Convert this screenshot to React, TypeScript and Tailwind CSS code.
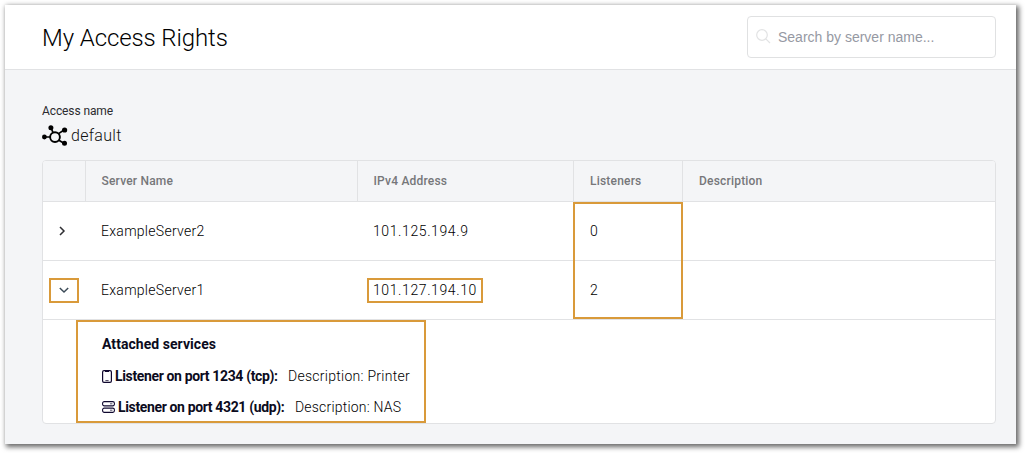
import React from "react";

const HubIcon = () => (
  <svg width="27" height="22" viewBox="0 0 27 22" fill="none" stroke="#000" className="block shrink-0">
    <circle cx="13" cy="12.1" r="4.9" strokeWidth="1.9" />
    <path d="M2 12h6M9 3l2 4.4M16.6 8.6 22 5M16.8 15.2l5.2 3.1" strokeWidth="1.7" />
    <g fill="#000" stroke="none">
      <circle cx="2.4" cy="12" r="2.4" />
      <circle cx="8.9" cy="2.8" r="2.5" />
      <circle cx="22.6" cy="5" r="2.6" />
      <circle cx="22.5" cy="18.2" r="2.5" />
    </g>
  </svg>
);

const SearchIcon = () => (
  <svg width="15" height="15" viewBox="0 0 15 15" fill="none" stroke="#e2e3e4" strokeWidth="1.2" className="block shrink-0">
    <circle cx="6" cy="6" r="5.3" />
    <path d="m9.8 9.8 4.2 4.2" />
  </svg>
);

const Chevron = ({ open }: { open?: boolean }) => (
  <svg width="10" height="10" viewBox="0 0 10 10" fill="none" stroke={open ? "#3b4a57" : "#2f2f33"} strokeWidth="1.5" className="block">
    {open ? <path d="m0.8 3 4.2 4 4.2-4" /> : <path d="m3 0.9 4 4.1-4 4.1" />}
  </svg>
);

const DeviceIcon = () => (
  <svg width="10" height="13" viewBox="0 0 10 13" fill="none" stroke="#10082f" className="block shrink-0">
    <rect x="0.6" y="0.6" width="8.8" height="11.8" rx="1.4" strokeWidth="1.2" />
    <path d="M3 1.2h4" strokeWidth="1.4" />
    <path d="M3.4 10.6h3.2" strokeWidth="0.8" />
  </svg>
);

const ServerIcon = () => (
  <svg width="13" height="12" viewBox="0 0 13 12" fill="none" stroke="#10082f" strokeWidth="1.1" className="block shrink-0">
    <rect x="0.6" y="0.6" width="11.8" height="4.3" rx="1.6" />
    <rect x="0.6" y="7.1" width="11.8" height="4.3" rx="1.6" />
    <path d="M8 2.8h2.4M8 9.2h2.4" strokeWidth="0.7" />
  </svg>
);

const cols = "grid grid-cols-[43px_272px_216px_109px_1fr]";

export default function App() {
  return (
    <div className="h-[453px] w-[1025px] overflow-hidden bg-white p-[5px] font-['Roboto',sans-serif] text-[#0b0b20]">
      <div className="flex h-[439px] w-[1011px] flex-col bg-[#f4f5f7] shadow-[2px_2px_5px_1px_rgba(0,0,0,0.6)]">
        <header className="flex h-[65px] items-center justify-between border-b border-[#e1e2e4] bg-white pl-[37px] pr-5">
          <h1 className="pt-[2px] text-[24px] font-light leading-8 tracking-[-0.1px] text-black">My Access Rights</h1>
          <div className="-mt-px flex h-[42px] w-[249px] items-center gap-[7px] rounded-[4px] border border-[#e0e1e2] pl-2">
            <SearchIcon />
            <span className="font-['Liberation_Sans',sans-serif] text-[14px] leading-5 text-[#9699a3]">Search by server name...</span>
          </div>
        </header>

        <main className="pl-[37px] pr-5 pt-[33px]">
          <div className="h-4 text-[12px] leading-4 tracking-[-0.1px] text-[#2b2b2f]">Access name</div>
          <div className="mt-[2px] flex h-6 items-center gap-[2px] pt-[5px] text-[16px] text-[#111]">
            <HubIcon />
            <span className="font-light leading-6 tracking-[0.3px]">default</span>
          </div>

          <section className="mt-[15px] h-[264px] overflow-hidden rounded-[4px] border border-[#e1e2e4] bg-white">
            <div className={`${cols} h-[41px] border-b border-[#e1e2e4] bg-[#f4f5f7] text-[12px] font-medium leading-[41px] tracking-[0.2px] text-[#76777a]`}>
              <div className="border-r border-[#e1e2e4]" />
              <div className="border-r border-[#e1e2e4] pl-[15.5px]">Server Name</div>
              <div className="border-r border-[#e1e2e4] pl-[15.5px]">IPv4 Address</div>
              <div className="border-r border-[#e1e2e4] pl-[16px]">Listeners</div>
              <div className="pl-4">Description</div>
            </div>

            <div className={`${cols} h-[59px] items-center border-b border-[#e1e2e4] text-[14px] font-light text-black`}>
              <div className="pl-[14px]"><Chevron /></div>
              <div className="pl-[15px] tracking-[0.28px]">ExampleServer2</div>
              <div className="pl-[15px] tracking-[0.6px]">101.125.194.9</div>
              <div className="relative flex h-[58px] items-center pl-4">
                0
                <div className="absolute -left-px top-0 h-[117px] w-[110px] border-2 border-[#d99a3a]" />
              </div>
              <div />
            </div>

            <div className={`${cols} h-[59px] items-center border-b border-[#e1e2e4] text-[14px] font-light text-black`}>
              <div className="pl-[6px]">
                <div className="flex h-[25px] w-[30px] items-center justify-center border-2 border-[#d99a3a]"><Chevron open /></div>
              </div>
              <div className="pl-[15px] tracking-[0.28px]">ExampleServer1</div>
              <div className="pl-[9px]">
                <div className="flex h-[25px] w-[116px] items-center border-2 border-[#d99a3a] pl-1 tracking-[0.6px]">101.127.194.10</div>
              </div>
              <div className="pl-4">2</div>
              <div />
            </div>

            <div className="ml-[33px] flex h-[103px] w-[350px] flex-col border-2 border-[#d99a3a] pl-6 pt-3 text-[14px] leading-5">
              <div className="font-bold tracking-[0.05px]">Attached services</div>
              <div className="mt-3 flex h-5 items-center">
                <DeviceIcon />
                <span className="ml-[3px] w-[173px] whitespace-nowrap font-bold tracking-[-0.36px]">Listener on port 1234 (tcp):</span>
                <span className="font-light tracking-[0.27px] text-black">Description: Printer</span>
              </div>
              <div className="mt-[11px] flex h-5 items-center">
                <ServerIcon />
                <span className="ml-[3px] w-[177px] whitespace-nowrap font-bold tracking-[-0.36px]">Listener on port 4321 (udp):</span>
                <span className="font-light tracking-[0.2px] text-black">Description: NAS</span>
              </div>
            </div>
          </section>
        </main>
      </div>
    </div>
  );
}
